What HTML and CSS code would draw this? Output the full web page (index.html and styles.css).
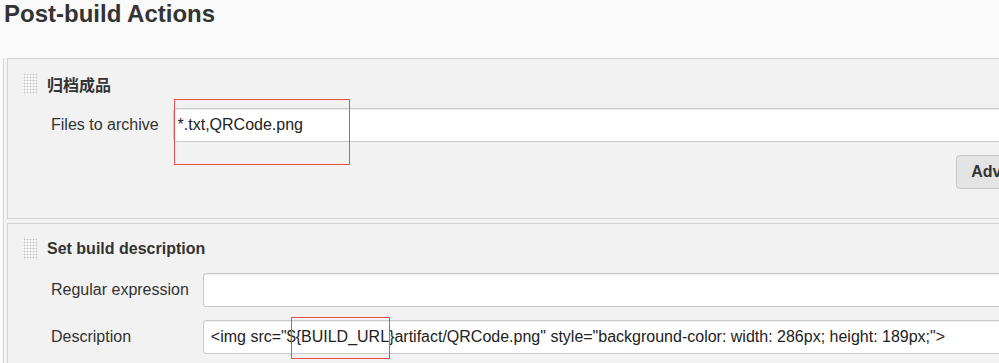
FILE: index.html
```html
<!DOCTYPE html>
<html lang="en">
<head>
    <meta charset="UTF-8">
    <meta name="viewport" content="width=device-width, initial-scale=1.0">
    <title>Post-build Actions</title>
    <link rel="stylesheet" href="styles.css">
</head>
<body>
    <h1>Post-build Actions</h1>

    <div class="chunks">
        <div class="chunk">
            <div class="chunk-header">
                <span class="handle"></span>
                <span class="chunk-title">归档成品</span>
            </div>
            <div class="form">
                <label class="label">Files to archive</label>
                <div class="field">
                    <input type="text" class="input" value="*.txt,QRCode.png">
                    <span class="mark mark-files"></span>
                </div>
                <button class="btn-advanced">Advanced...</button>
            </div>
        </div>

        <div class="chunk">
            <div class="chunk-header">
                <span class="handle"></span>
                <span class="chunk-title">Set build description</span>
            </div>
            <div class="form">
                <label class="label">Regular expression</label>
                <div class="field">
                    <input type="text" class="input">
                </div>
                <label class="label">Description</label>
                <div class="field">
                    <input type="text" class="input input-wide" value='&lt;img src="${BUILD_URL}artifact/QRCode.png" style="background-color: width: 286px; height: 189px;"&gt;'>
                    <span class="mark mark-url"></span>
                </div>
            </div>
        </div>
    </div>
</body>
</html>
```

FILE: styles.css
```css
body {
    margin: 0;
    background-color: #fafafa;
    font-family: "Liberation Sans", Arial, "Noto Sans CJK SC", sans-serif;
    color: #333;
    overflow: hidden;
}
h1 {
    margin: 0;
    padding-left: 4px;
    font-size: 24px;
    line-height: 28px;
    font-weight: bold;
    color: #333;
}
.chunks {
    width: 1085px;
    margin-top: 30px;
    margin-left: 3px;
    padding-left: 3px;
    border-left: 1px solid #d6d6d6;
    background-color: #f4f4f4;
}
.chunk {
    background-color: #f2f2f2;
    border: 1px solid #d2d2d2;
    padding: 14px 15px 29px;
    margin-bottom: 4px;
}
.chunk-header {
    display: flex;
    align-items: center;
    gap: 10px;
    height: 22px;
}
.handle {
    width: 14px;
    height: 22px;
    background-color: #fbfbfb;
    background-image: radial-gradient(circle, #c4c4c4 0.9px, transparent 1.1px);
    background-size: 3px 3px;
}
.chunk-title {
    font-size: 16px;
    font-weight: bold;
    color: #333;
}
.form {
    display: grid;
    grid-template-columns: auto 1fr;
    column-gap: 14px;
    row-gap: 13px;
    margin-top: 13px;
    margin-left: 28px;
}
.label {
    align-self: center;
    font-size: 16px;
    color: #333;
}
.field {
    position: relative;
}
.input {
    display: block;
    box-sizing: border-box;
    width: 100%;
    height: 34px;
    padding: 0 4px;
    border: 1px solid #c9c9c9;
    border-radius: 3px;
    box-shadow: inset 0 1px 1px rgba(0, 0, 0, 0.08);
    background-color: #fff;
    font-family: inherit;
    font-size: 16px;
    color: #222;
}
.input-wide {
    padding-left: 7px;
}
.btn-advanced {
    grid-column: 2;
    justify-self: end;
    height: 34px;
    padding: 0 14px;
    border: 1px solid #c6c6c6;
    border-radius: 4px;
    background-color: #e4e4e4;
    font-family: inherit;
    font-size: 16px;
    font-weight: bold;
    color: #333;
}
.mark {
    position: absolute;
    border: 1px solid #e85050;
    pointer-events: none;
}
.mark-files {
    left: 1px;
    top: -9px;
    width: 174px;
    height: 64px;
}
.mark-url {
    left: 88px;
    top: -3px;
    width: 97px;
    height: 40px;
}
```
